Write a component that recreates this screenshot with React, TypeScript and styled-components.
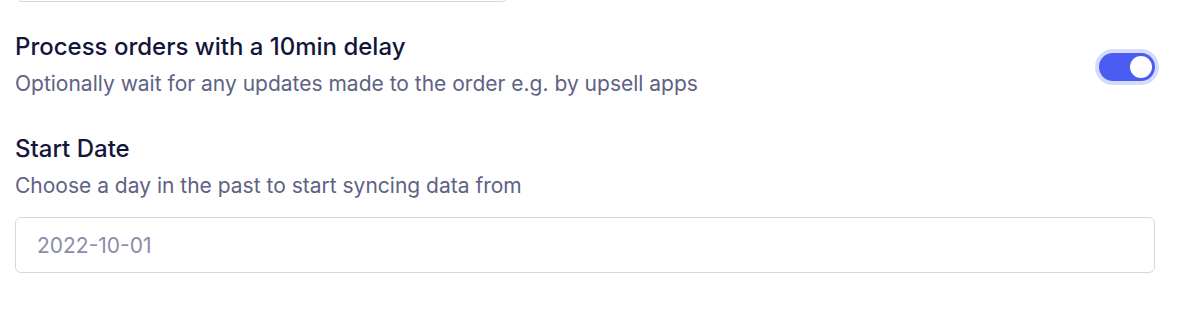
import styled, { createGlobalStyle } from "styled-components";

const GlobalStyle = createGlobalStyle`
  html, body {
    margin: 0;
    padding: 0;
    background: #ffffff;
  }
  body {
    font-family: Inter, "Noto Sans", sans-serif;
    -webkit-font-smoothing: antialiased;
  }
`;

const Page = styled.div`
  padding: 0 26px 0 15px;
  display: flex;
  flex-direction: column;
`;

// bottom edge of the field above, scrolled mostly out of view
const TopInputEdge = styled.div`
  width: 490px;
  height: 12px;
  margin-top: -12px;
  margin-left: 1px;
  border: 1px solid #d6d6e2;
  border-radius: 6px;
`;

const SettingRow = styled.div`
  display: flex;
  align-items: center;
  justify-content: space-between;
  margin-top: 31px;
`;

const TextBlock = styled.div`
  display: flex;
  flex-direction: column;
`;

const Title = styled.h3`
  margin: 0;
  font-size: 24px;
  line-height: 28px;
  font-weight: 500;
  color: #13163b;
`;

const Description = styled.p`
  margin: 10px 0 0;
  font-size: 21px;
  line-height: 26px;
  font-weight: 400;
  color: #5e6284;
`;

const Switch = styled.button<{ $on: boolean }>`
  position: relative;
  width: 56px;
  height: 28px;
  padding: 0;
  margin-top: 3px;
  border: none;
  border-radius: 14px;
  background: ${(p) => (p.$on ? "#4a5cf2" : "#d9dbe6")};
  box-shadow: 0 0 0 4px #d5dbfb;
  cursor: pointer;
  &::after {
    content: "";
    position: absolute;
    top: 3px;
    left: ${(p) => (p.$on ? "31px" : "3px")};
    width: 22px;
    height: 22px;
    border-radius: 50%;
    background: #ffffff;
  }
`;

const Field = styled.div`
  display: flex;
  flex-direction: column;
  margin-top: 38px;
`;

const DateInput = styled.input`
  margin-top: 18px;
  height: 56px;
  box-sizing: border-box;
  width: 100%;
  padding: 0 21px;
  border: 1px solid #d6d6e2;
  border-radius: 6px;
  font-family: Inter, "Noto Sans", sans-serif;
  font-size: 21px;
  color: #13163b;
  outline: none;
  &::placeholder {
    color: #8a8da9;
  }
`;

export default function App() {
  return (
    <>
      <GlobalStyle />
      <Page>
        <TopInputEdge />
        <SettingRow>
          <TextBlock>
            <Title>Process orders with a 10min delay</Title>
            <Description>
              Optionally wait for any updates made to the order e.g. by upsell
              apps
            </Description>
          </TextBlock>
          <Switch $on aria-label="Process orders with a 10min delay" />
        </SettingRow>
        <Field>
          <Title>Start Date</Title>
          <Description>
            Choose a day in the past to start syncing data from
          </Description>
          <DateInput placeholder="2022-10-01" />
        </Field>
      </Page>
    </>
  );
}
